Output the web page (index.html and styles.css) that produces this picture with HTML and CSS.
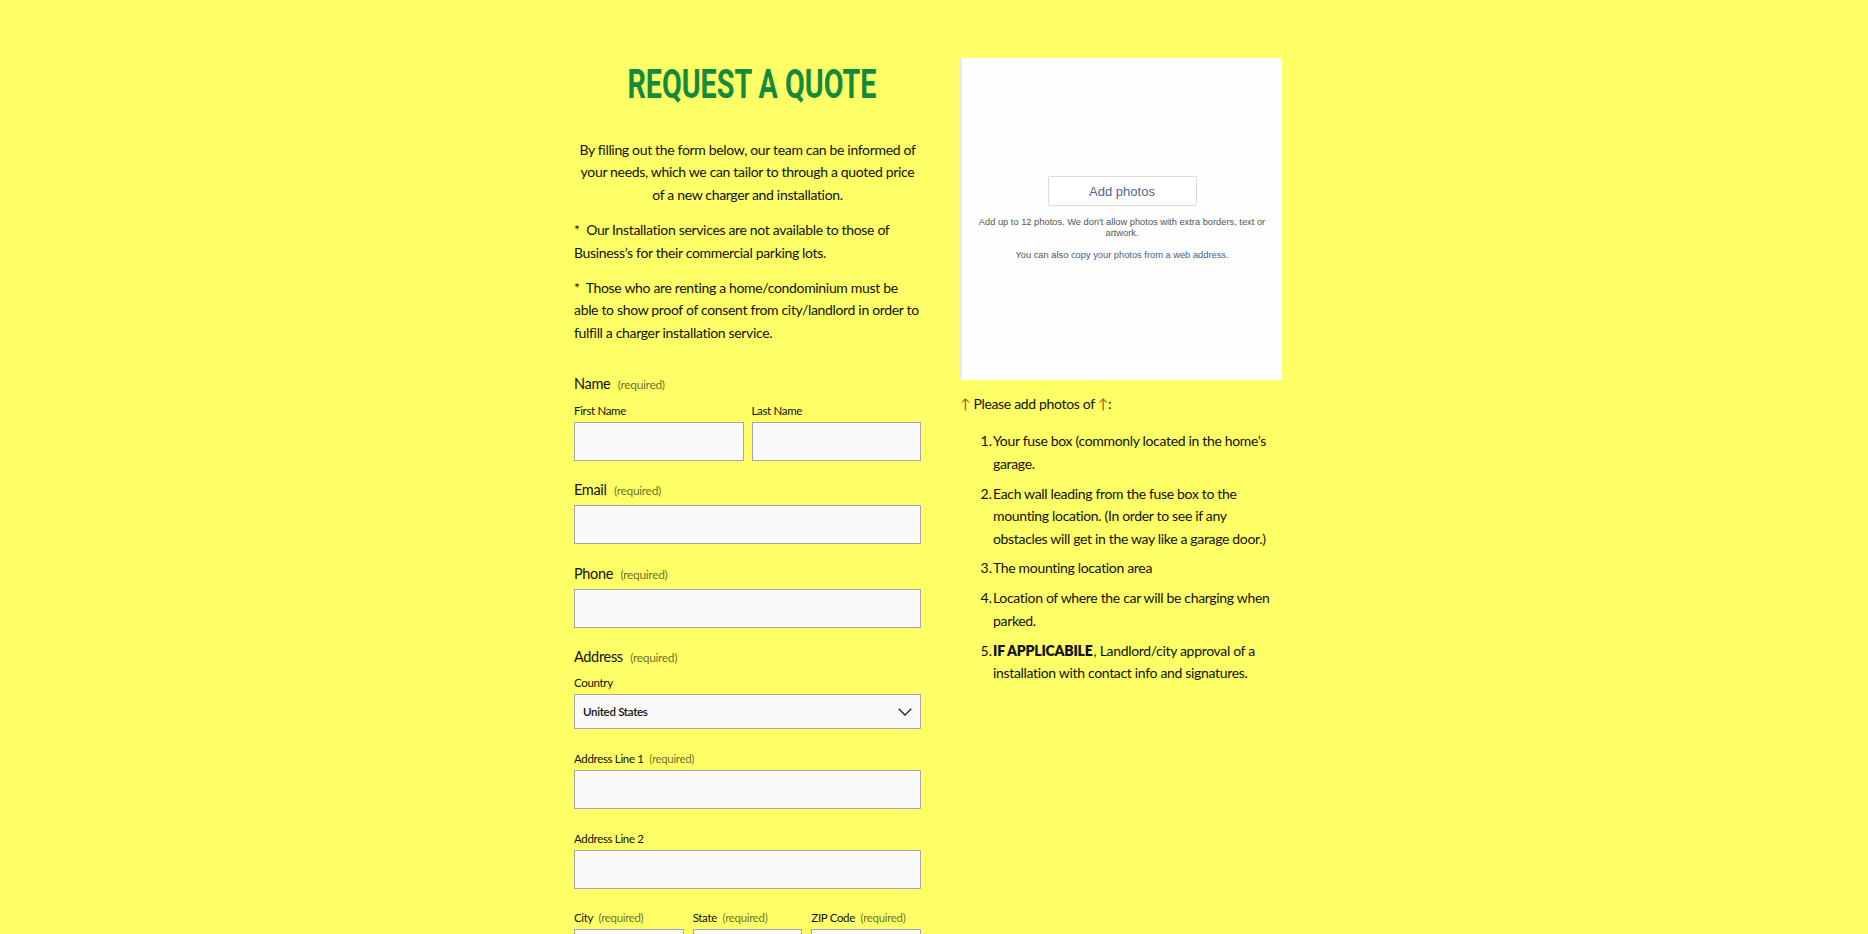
FILE: index.html
```html
<!DOCTYPE html>
<html lang="en">
<head>
<meta charset="utf-8">
<title>Request a Quote</title>
<link rel="stylesheet" href="styles.css">
</head>
<body>
<main class="page">
  <section class="form-col">
    <h1 class="title"><span class="title-text">REQUEST A QUOTE</span></h1>
    <p class="intro">By filling out the form below, our team can be informed of your needs, which we can tailor to through a quoted price of a new charger and installation.</p>
    <p class="note">*&nbsp; Our Installation services are not available to those of Business’s for their commercial parking lots.</p>
    <p class="note">*&nbsp; Those who are renting a home/condominium must be able to show proof of consent from city/landlord in order to fulfill a charger installation service.</p>

    <form class="form">
      <div class="field field-name">
        <div class="label">Name <span class="req">(required)</span></div>
        <div class="row two">
          <div class="sub">
            <div class="sublabel">First Name</div>
            <input class="input" type="text">
          </div>
          <div class="sub">
            <div class="sublabel">Last Name</div>
            <input class="input" type="text">
          </div>
        </div>
      </div>

      <div class="field field-email">
        <div class="label">Email <span class="req">(required)</span></div>
        <input class="input" type="email">
      </div>

      <div class="field field-phone">
        <div class="label">Phone <span class="req">(required)</span></div>
        <input class="input" type="tel">
      </div>

      <div class="field field-address">
        <div class="label">Address <span class="req">(required)</span></div>
        <div class="sub sub-country">
          <div class="sublabel">Country</div>
          <div class="select-wrap">
            <select class="select">
              <option>United States</option>
            </select>
            <svg class="chevron" width="14" height="8" viewBox="0 0 14 8"><path d="M0.7 0.7 L7 7 L13.3 0.7" fill="none" stroke="#222" stroke-width="1.3"/></svg>
          </div>
        </div>
        <div class="sub sub-gap">
          <div class="sublabel">Address Line 1 <span class="req">(required)</span></div>
          <input class="input" type="text">
        </div>
        <div class="sub sub-gap">
          <div class="sublabel">Address Line 2</div>
          <input class="input" type="text">
        </div>
        <div class="row three sub-gap2">
          <div class="sub">
            <div class="sublabel">City <span class="req">(required)</span></div>
            <input class="input" type="text">
          </div>
          <div class="sub">
            <div class="sublabel">State <span class="req">(required)</span></div>
            <input class="input" type="text">
          </div>
          <div class="sub">
            <div class="sublabel">ZIP Code <span class="req">(required)</span></div>
            <input class="input" type="text">
          </div>
        </div>
      </div>
    </form>
  </section>

  <aside class="side-col">
    <div class="photo-box">
      <div class="add-btn">Add photos</div>
      <p class="photo-hint">Add up to 12 photos. We don't allow photos with extra borders, text or artwork.</p>
      <p class="photo-hint">You can also <span class="photo-link">copy your photos from a web address.</span></p>
    </div>
    <p class="please"><span class="arrow">↑</span> Please add photos of <span class="arrow">↑</span>:</p>
    <ol class="list">
      <li><span class="item-text">Your fuse box (commonly located in the home’s garage.</span></li>
      <li><span class="item-text">Each wall leading from the fuse box to the mounting location. (In order to see if any obstacles will get in the way like a garage door.)</span></li>
      <li><span class="item-text">The mounting location area</span></li>
      <li><span class="item-text">Location of where the car will be charging when parked.</span></li>
      <li><span class="item-text"><strong>IF APPLICABILE</strong>, Landlord/city approval of a installation with contact info and signatures.</span></li>
    </ol>
  </aside>
</main>
</body>
</html>
```

FILE: styles.css
```css
* { box-sizing: border-box; }

html, body {
  margin: 0;
  padding: 0;
  background: #ffff66;
}

body {
  font-family: "Lato", "Noto Sans", sans-serif;
  color: #111;
  font-size: 14px;
  letter-spacing: -0.33px;
}

.page {
  width: 720px;
  margin: 0 auto;
  padding-top: 58px;
  display: grid;
  grid-template-columns: 347px 322px;
  column-gap: 39px;
  align-items: start;
}

/* Left column */
.title {
  margin: 6px 0 0;
  text-align: center;
  white-space: nowrap;
  font-family: "Roboto", "Liberation Sans", sans-serif;
  font-weight: 700;
  font-size: 41px;
  line-height: 41px;
  color: #138a3c;
  letter-spacing: 0;
}

.title-text {
  display: inline-block;
  transform: scaleX(0.70);
}

.intro {
  margin: 34px 0 0;
  text-align: center;
  line-height: 22.4px;
  padding: 0 4px;
}

.note {
  margin: 13px 0 0;
  line-height: 22.4px;
}

.form {
  margin-top: 30px;
}

.label {
  font-size: 14.5px;
  line-height: 20px;
  margin-bottom: 4px;
  color: #111;
}

.req {
  font-size: 12px;
  color: rgba(0, 0, 0, 0.6);
  margin-left: 4px;
}

.sublabel {
  font-size: 11.5px;
  line-height: 16px;
  margin-bottom: 3px;
  color: #111;
}

.sublabel .req {
  font-size: 11.5px;
  margin-left: 3px;
}

.input {
  display: block;
  width: 100%;
  height: 39px;
  margin: 0;
  border: 1px solid #a6a6b0;
  border-radius: 0;
  background: #fafafa;
  font: inherit;
  padding: 0 8px;
}

.row {
  display: grid;
  column-gap: 8px;
}

.row.two { grid-template-columns: 1fr 1fr; }
.row.three { grid-template-columns: 1fr 1fr 1fr; column-gap: 9px; }

.field-name .label { margin-bottom: 8px; }
.field-email { margin-top: 19px; }
.field-phone { margin-top: 20px; }
.field-address { margin-top: 19px; }
.sub-country { margin-top: 7px; }
.sub-gap { margin-top: 22px; }
.sub-gap2 { margin-top: 21px; }

.select-wrap {
  position: relative;
}

.select {
  display: block;
  width: 100%;
  height: 35px;
  margin: 0;
  appearance: none;
  -webkit-appearance: none;
  border: 1px solid #a6a6b0;
  border-radius: 0;
  background: #fafafa;
  font-family: "Lato", sans-serif;
  font-size: 11.5px;
  font-weight: 600;
  color: #111;
  padding: 0 8px;
  letter-spacing: -0.3px;
}

.chevron {
  position: absolute;
  right: 9px;
  top: 14px;
  pointer-events: none;
}

/* Right column */
.photo-box {
  width: 322px;
  height: 322px;
  background: #fefefe;
  border-left: 2px solid #ececec;
  display: flex;
  flex-direction: column;
  align-items: center;
  padding-top: 118px;
  font-family: "Liberation Sans", Arial, sans-serif;
  letter-spacing: 0;
}

.add-btn {
  width: 149px;
  height: 30px;
  border: 1px solid #dcdcdc;
  border-radius: 2px;
  display: flex;
  align-items: center;
  justify-content: center;
  font-size: 13px;
  color: #4a6891;
  background: #fff;
}

.photo-hint {
  margin: 11px 0 0;
  width: 290px;
  text-align: center;
  font-size: 9.3px;
  line-height: 11.4px;
  color: #555;
}

.photo-hint + .photo-hint {
  margin-top: 10px;
}

.photo-link {
  color: #3f5f8c;
}

.please {
  margin: 13px 0 0;
  line-height: 22.4px;
}

.arrow {
  color: #b8451f;
}

.list {
  margin: 15px 0 0;
  padding: 0;
  list-style: none;
  counter-reset: item;
  line-height: 22.4px;
}

.list li {
  counter-increment: item;
  display: grid;
  grid-template-columns: 32px 1fr;
  column-gap: 1px;
  margin-bottom: 7.5px;
}

.list li::before {
  content: counter(item) ".";
  text-align: right;
  letter-spacing: 0;
}

.list strong {
  font-weight: 800;
  letter-spacing: -0.2px;
  margin-right: 1px;
}
```
